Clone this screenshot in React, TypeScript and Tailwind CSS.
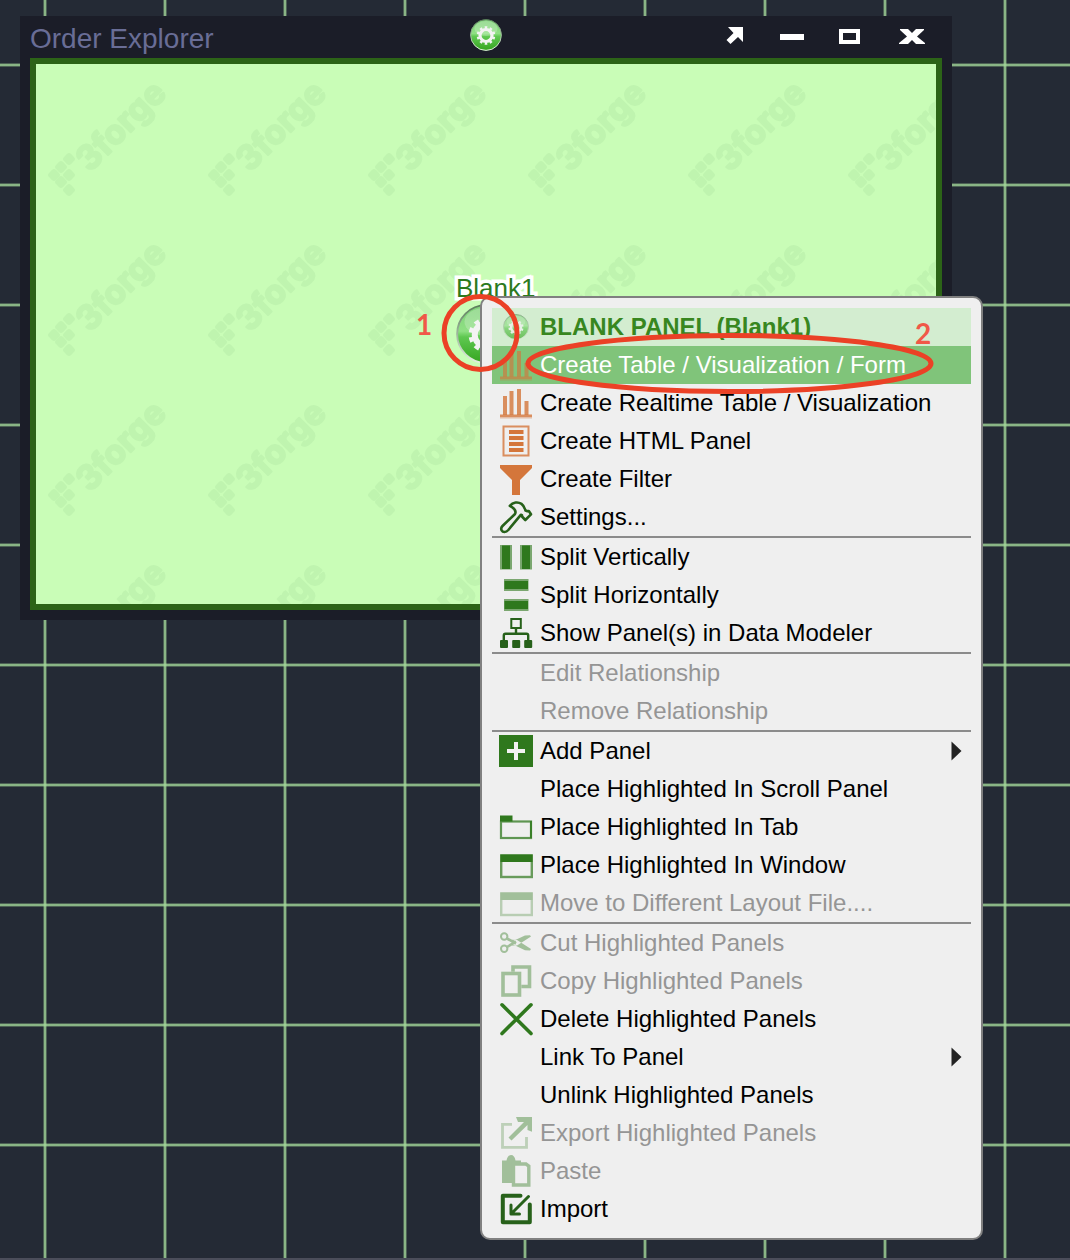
import type { ReactNode } from "react";
import clsx from "clsx";

const GREEN = "#2f781d";
const DARK_GREEN = "#27611a";
const ORANGE = "#d4763b";

/* ── Gear in a glossy green ball ── */
function GearBall({ id, className }: { id: string; className?: string }) {
  return (
    <svg viewBox="0 0 32 32" className={className} aria-hidden="true">
      <defs>
        <linearGradient id={`${id}-ball`} x1="0" y1="0" x2="0" y2="1">
          <stop offset="0" stopColor="#7fd07a" />
          <stop offset="0.45" stopColor="#8fe083" />
          <stop offset="0.55" stopColor="#5fc851" />
          <stop offset="1" stopColor="#35a51f" />
        </linearGradient>
        <linearGradient id={`${id}-rim`} x1="0" y1="0" x2="0" y2="1">
          <stop offset="0" stopColor="#5a7d5a" />
          <stop offset="1" stopColor="#e3efe0" />
        </linearGradient>
      </defs>
      <circle cx="16" cy="16" r="15.4" fill={`url(#${id}-ball)`} stroke={`url(#${id}-rim)`} strokeWidth="1" />
      <ellipse cx="16" cy="9.5" rx="11.5" ry="7.5" fill="#fff" opacity="0.22" />
      <g fill="none" stroke="#f3f3f3" transform="rotate(-90 16 16.5)">
        <circle cx="16" cy="16.5" r="6" strokeWidth="3.2" />
        <circle
          cx="16"
          cy="16.5"
          r="8"
          strokeWidth="2.6"
          pathLength="20"
          strokeDasharray="1 1"
          strokeDashoffset="0.5"
        />
      </g>
    </svg>
  );
}

/* ── Menu icons, all on a 32px box ── */
const chartIcon = (
  <g fill={ORANGE}>
    <g opacity="0.8">
      <rect x="3" y="9" width="4" height="19" />
      <rect x="9.5" y="4" width="4" height="24" />
      <rect x="17" y="2" width="4" height="26" />
      <rect x="24.5" y="14" width="4" height="14" />
    </g>
    <rect y="27.5" width="32" height="2.5" opacity="0.8" />
    <rect y="30" width="32" height="1.5" opacity="0.4" />
  </g>
);

const htmlIcon = (
  <g fill={ORANGE}>
    <rect x="3.5" y="1.5" width="25" height="29" fill="none" stroke={ORANGE} strokeWidth="2" opacity="0.8" />
    <rect x="9" y="5" width="14.5" height="4" />
    <rect x="9" y="11" width="14.5" height="4" />
    <rect x="9" y="17" width="14.5" height="4" />
    <rect x="9" y="23" width="14.5" height="4" />
  </g>
);

const filterIcon = <path d="M0 2H32V5L20 17V32H12V17L0 5Z" fill={ORANGE} />;

const hammerIcon = (
  <path
    d="M9.8 4.8C13 1 18 .6 21.5 2.8C24 4.5 24.5 6.5 25.5 9.5L27.5 10.3L28.8 10L31 13.3L25.3 19L22 15.5V14.3L20.8 13.8L8.3 29C6 31.6 2.8 31.6 1.7 29.5C.8 27.8 1.2 26.3 2.5 25L15 13C16.8 9.5 14 7 9.8 4.8Z"
    fill="none"
    stroke={DARK_GREEN}
    strokeWidth="2.6"
    strokeLinejoin="round"
  />
);

const splitVIcon = (
  <g fill={GREEN}>
    <g opacity="0.6">
      <rect y="4" width="12" height="24.5" />
      <rect x="20" y="4" width="12" height="24.5" />
    </g>
    <rect x="2" y="4.5" width="8" height="23.5" />
    <rect x="22" y="4.5" width="8" height="23.5" />
  </g>
);

const splitHIcon = (
  <g fill={GREEN}>
    <g opacity="0.6">
      <rect x="4" width="24.5" height="12" />
      <rect x="4" y="20" width="24.5" height="12" />
    </g>
    <rect x="4.5" y="2" width="23.5" height="8" />
    <rect x="4.5" y="22" width="23.5" height="8" />
  </g>
);

const treeIcon = (
  <g fill={DARK_GREEN}>
    <rect x="11.3" y="2" width="9.5" height="9" fill="none" stroke={DARK_GREEN} strokeWidth="2" />
    <path
      d="M16 11V17M3.8 24V18.5Q3.8 16.8 5.5 16.8H26.5Q28.2 16.8 28.2 18.5V24"
      fill="none"
      stroke={DARK_GREEN}
      strokeWidth="2.4"
    />
    <rect y="23" width="8" height="8" rx="1" />
    <rect x="12.2" y="23" width="8" height="8" rx="1" />
    <rect x="24.2" y="23" width="8" height="8" rx="1" />
  </g>
);

const addIcon = (
  <g>
    <rect x="-1" width="34" height="32" fill={GREEN} />
    <path d="M16 7V25M7 16H25" stroke="#f2f2f2" strokeWidth="4" />
  </g>
);

const tabIcon = (
  <g>
    <rect x="1" y="10.5" width="30" height="16.5" fill="none" stroke={GREEN} strokeWidth="2.2" opacity="0.75" />
    <path d="M0 4.5H12.5V10.5H0Z" fill={GREEN} />
    <path d="M31 10V27" stroke={GREEN} strokeWidth="1.5" />
  </g>
);

const windowIcon = (
  <g>
    <rect x="1.2" y="6.5" width="30.6" height="21.5" fill="none" stroke={GREEN} strokeWidth="2.4" opacity="0.7" />
    <rect x="0.5" y="5.5" width="32" height="7.5" fill={GREEN} />
  </g>
);

const cutIcon = (
  <g fill="none" stroke={GREEN}>
    <circle cx="4.2" cy="9.5" r="3.2" strokeWidth="2" />
    <circle cx="4.2" cy="21.8" r="3.2" strokeWidth="2" />
    <path d="M7 11.5L16 16.5M7 20L16 14.5" strokeWidth="2.6" />
    <path
      d="M12 12.8L17 13L31 22L30 23.5L25 23.3L12 17ZM12 18.5L17 18.5L31 9.5L30 8.2L25 8.6L12 14.5Z"
      fill={GREEN}
      stroke="none"
    />
  </g>
);

const copyIcon = (
  <g fill="none" stroke={GREEN} strokeWidth="3.6">
    <path d="M13 6.7V2H29.5V21.5H21.3" />
    <rect x="3" y="8.5" width="16.5" height="21.5" />
  </g>
);

const deleteIcon = (
  <path d="M2 1.8L31 30.5M31 1.8L2 30.5" stroke={GREEN} strokeWidth="3.6" strokeLinecap="round" />
);

const exportIcon = (
  <g>
    <path d="M12 7.3H2.5V30.3H26.5V20" fill="none" stroke={GREEN} strokeWidth="2.8" opacity="0.65" />
    <path d="M16 0H32V14.7L27.5 13V8L11.5 23.5L8.5 20.5L24 5H18Z" fill={GREEN} />
  </g>
);

const pasteIcon = (
  <g>
    <path d="M2 5.5H6.5Q7.5 0 11 0Q14.5 0 15.5 5.5H21V9H12V28H2Z" fill={GREEN} />
    <path d="M13.5 9H26L28.8 11V30H13.5Z" fill="#efefef" stroke={GREEN} strokeWidth="3.4" />
  </g>
);

const importIcon = (
  <g fill="none" stroke={DARK_GREEN} strokeLinejoin="round" strokeLinecap="round">
    <path d="M20.5 2.8H2.8V29.3H29.8V11.5" strokeWidth="4" />
    <path d="M28.5 3.5L11 21M11 12V21H19.5" strokeWidth="3" />
  </g>
);

type Item = {
  label: string;
  icon?: ReactNode;
  disabled?: boolean;
  active?: boolean;
  submenu?: boolean;
};

const groups: Item[][] = [
  [
    { label: "Create Table / Visualization / Form", icon: chartIcon, active: true },
    { label: "Create Realtime Table / Visualization", icon: chartIcon },
    { label: "Create HTML Panel", icon: htmlIcon },
    { label: "Create Filter", icon: filterIcon },
    { label: "Settings...", icon: hammerIcon },
  ],
  [
    { label: "Split Vertically", icon: splitVIcon },
    { label: "Split Horizontally", icon: splitHIcon },
    { label: "Show Panel(s) in Data Modeler", icon: treeIcon },
  ],
  [
    { label: "Edit Relationship", disabled: true },
    { label: "Remove Relationship", disabled: true },
  ],
  [
    { label: "Add Panel", icon: addIcon, submenu: true },
    { label: "Place Highlighted In Scroll Panel" },
    { label: "Place Highlighted In Tab", icon: tabIcon },
    { label: "Place Highlighted In Window", icon: windowIcon },
    { label: "Move to Different Layout File....", icon: windowIcon, disabled: true },
  ],
  [
    { label: "Cut Highlighted Panels", icon: cutIcon, disabled: true },
    { label: "Copy Highlighted Panels", icon: copyIcon, disabled: true },
    { label: "Delete Highlighted Panels", icon: deleteIcon },
    { label: "Link To Panel", submenu: true },
    { label: "Unlink Highlighted Panels" },
    { label: "Export Highlighted Panels", icon: exportIcon, disabled: true },
    { label: "Paste", icon: pasteIcon, disabled: true },
    { label: "Import", icon: importIcon },
  ],
];

function MenuRow({ item }: { item: Item }) {
  return (
    <button
      type="button"
      role="menuitem"
      disabled={item.disabled}
      className={clsx(
        "flex h-[38px] w-full items-center gap-2 px-2 text-left text-2xl whitespace-nowrap",
        item.active && "bg-[#80c47a] text-white",
        item.disabled && "text-[#959595]",
        !item.active && !item.disabled && "text-black"
      )}
    >
      <svg
        viewBox="0 0 32 32"
        aria-hidden="true"
        className={clsx("size-8 shrink-0 overflow-visible", item.disabled && "opacity-40", item.active && "opacity-80")}
      >
        {item.icon}
      </svg>
      <span className="grow">{item.label}</span>
      {item.submenu && (
        <svg viewBox="0 0 12 20" aria-hidden="true" className="h-5 w-3">
          <path d="M0.5 0.5L10.5 10L0.5 19.5Z" fill="#222" />
        </svg>
      )}
    </button>
  );
}

function ContextMenu() {
  return (
    <div
      role="menu"
      aria-label="Blank panel"
      className="absolute top-[296px] left-[480px] w-[503px] rounded-[10px] border-2 border-[#808080] bg-[#efefef] p-[10px]"
    >
      <div className="flex h-[38px] items-center gap-2 bg-[#d3edd0] px-2 text-2xl font-bold whitespace-nowrap text-[#38871f]">
        <span className="flex w-8 justify-center">
          <GearBall id="menu" className="size-[26px] opacity-65" />
        </span>
        BLANK PANEL (Blank1)
      </div>
      {groups.map((group, i) => (
        <div key={i} role="group" className={clsx(i > 0 && "border-t-2 border-[#8b8b8b]")}>
          {group.map((item) => (
            <MenuRow key={item.label} item={item} />
          ))}
        </div>
      ))}
    </div>
  );
}

/* ── Tiled diagonal brand mark behind the panel ── */
const brandDots = [
  [33, 95],
  [25, 103],
  [18, 111],
  [33, 111],
  [25, 118],
  [33, 126],
];

function Watermark() {
  return (
    <svg className="absolute inset-0 size-full" aria-hidden="true">
      <defs>
        <pattern id="brand" width="160" height="160" patternUnits="userSpaceOnUse">
          <g fill="#bff4af">
            {brandDots.map(([x, y]) => (
              <rect
                key={`${x}-${y}`}
                x={x - 5}
                y={y - 5}
                width="10"
                height="10"
                rx="3"
                transform={`rotate(45 ${x} ${y})`}
              />
            ))}
            <text
              transform="translate(54 109) rotate(-45)"
              fontFamily="Inter, sans-serif"
              fontWeight="700"
              fontSize="34"
              stroke="#bff4af"
              strokeWidth="2"
              strokeLinejoin="round"
            >
              3forge
            </text>
          </g>
        </pattern>
      </defs>
      <rect width="100%" height="100%" fill="url(#brand)" />
    </svg>
  );
}

const windowControls = [
  { label: "Pop out", shape: <path d="M22 11H37V26L32 21L24.5 28L20.5 24L27.5 17Z" /> },
  { label: "Minimize", shape: <path d="M16 18H40V24H16Z" /> },
  { label: "Maximize", shape: <path fillRule="evenodd" d="M17 13H38V28H17ZM21 17V24H34V17Z" /> },
  {
    label: "Close",
    shape: <path d="M20 13H28L32 17L36 13H44V14L37 20.5L45 27V28H36L32 24L28 28H19V27L27 20.5L20 14Z" />,
  },
];

function OrderWindow() {
  return (
    <section className="absolute top-4 left-5 w-[932px] bg-[#1b1d28]">
      <header className="grid h-[42px] grid-cols-[1fr_auto_1fr] items-start px-[10px]">
        <h1 className="text-[28px] leading-[46px] whitespace-nowrap text-[#696d96]">Order Explorer</h1>
        <button type="button" aria-label="Window options" className="flex items-start pt-[3px]">
          <GearBall id="title" className="size-8" />
        </button>
        <div className="flex justify-end">
          {windowControls.map((c) => (
            <button key={c.label} type="button" aria-label={c.label}>
              <svg viewBox="4 0 58 42" className="h-[42px] w-[58px]" fill="#fff">
                {c.shape}
              </svg>
            </button>
          ))}
        </div>
      </header>
      <div className="px-[10px] pb-[10px]">
        <div className="relative flex h-[552px] items-center justify-center overflow-hidden border-6 border-[#2c6317] bg-[#c9fdb7]">
          <Watermark />
          <div className="relative size-[60px]">
            <span className="absolute bottom-full left-0 text-[26px] leading-8 text-[#2c7a1e] [-webkit-text-stroke:7px_white] [paint-order:stroke_fill] [stroke-linejoin:round]">
              Blank1
            </span>
            <button type="button" aria-label="Configure Blank1" className="relative block">
              <GearBall id="panel" className="size-[60px]" />
            </button>
          </div>
        </div>
      </div>
    </section>
  );
}

/* ── Numbered step marks drawn over everything ── */
function StepMarks() {
  return (
    <svg className="pointer-events-none absolute inset-0 size-full">
      <g fill="none" stroke="#eb4126" strokeWidth="5">
        <circle cx="480.5" cy="333" r="36.5" />
        <ellipse cx="729.5" cy="363.5" rx="201.5" ry="28" />
      </g>
      <g fill="#f05848" fontFamily="Lato, sans-serif" fontWeight="700" fontSize="28">
        <text x="416" y="335">1</text>
        <text x="915" y="344">2</text>
      </g>
    </svg>
  );
}

export default function App() {
  return (
    <main className="relative min-h-screen overflow-hidden border-b-2 border-[#4b4d5a] bg-[#242a35] bg-[image:linear-gradient(to_right,#a3d89950_1px,#a3d899cc_1px,#a3d899cc_3px,#a3d89950_3px,#a3d89950_4px,transparent_4px),linear-gradient(to_bottom,#a3d89950_1px,#a3d899cc_1px,#a3d899cc_3px,#a3d89950_3px,#a3d89950_4px,transparent_4px)] bg-[size:120px_120px] bg-[position:43px_63px] font-['Liberation_Sans',Arial,sans-serif]">
      <OrderWindow />
      <ContextMenu />
      <StepMarks />
    </main>
  );
}
